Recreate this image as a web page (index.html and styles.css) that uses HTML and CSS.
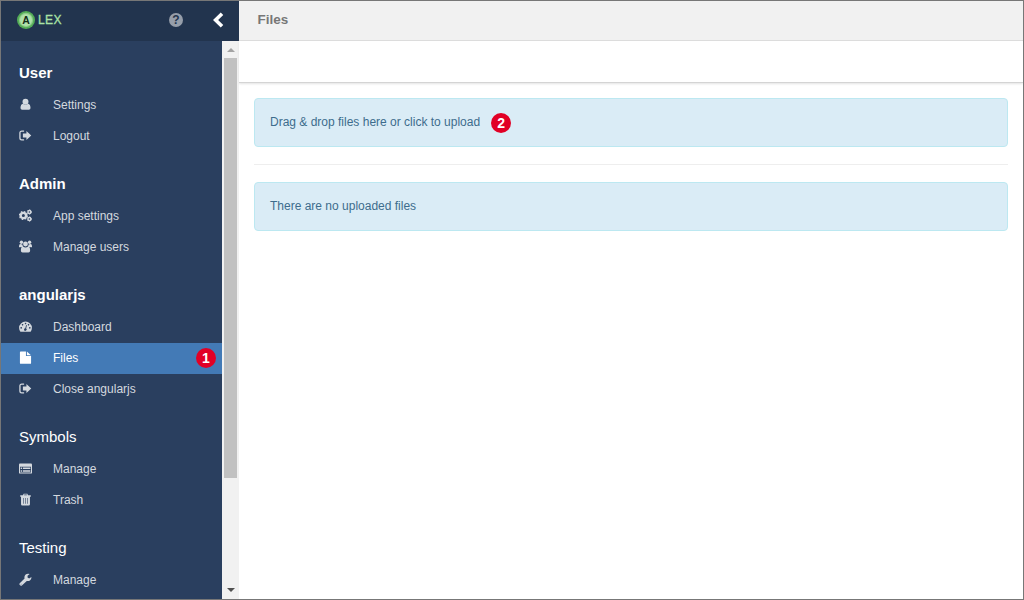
FILE: index.html
```html
<!DOCTYPE html>
<html lang="en">
<head>
<meta charset="utf-8">
<title>ALEX - Files</title>
<link rel="stylesheet" href="styles.css">
</head>
<body>
<div class="app">
  <aside class="sidebar">
    <header class="brand">
      <svg class="logo" viewBox="0 0 20 20"><circle cx="10" cy="10" r="9" fill="#54ad57"/><circle cx="10" cy="10" r="7.200" fill="#8ccb87"/><circle cx="10" cy="10" r="6" fill="#b0e2ab"/></svg>
      <span class="logo-letter">A</span>
      <span class="brand-name">LEX</span>
      <span class="help">?</span>
      <svg class="collapse" viewBox="0 0 12 16"><path d="M10 1.800 3.600 8l6.400 6.200" fill="none" stroke="#fff" stroke-width="3.600"/></svg>
    </header>
    <div class="side-body">
      <nav class="nav">
        <section class="group">
          <h2>User</h2>
          <a class="item"><svg viewBox="0 0 14 14"><circle cx="7" cy="4" r="3.200"/><path d="M4.200 6.100Q7 8.300 9.800 6.100 12.400 6.600 12.400 10.800 12.400 12.700 10.600 12.700H3.400Q1.600 12.700 1.600 10.800 1.600 6.600 4.200 6.100z"/></svg>Settings</a>
          <a class="item"><svg viewBox="0 0 14 14"><path d="M5.500 2.300H3Q1 2.300 1 4.300V9.700Q1 11.700 3 11.700H5.500" fill="none" stroke="currentColor" stroke-width="1.400"/><path d="M4.200 4.800H8V2.100L13.200 7 8 11.900V9.200H4.200z"/></svg>Logout</a>
        </section>
        <section class="group">
          <h2>Admin</h2>
          <a class="item"><svg viewBox="0 0 14 14"><g fill="none" stroke="currentColor"><circle cx="4.700" cy="7" r="2.900" stroke-width="2.500"/><circle cx="4.700" cy="7" r="4.200" stroke-width="1.400" stroke-dasharray="1.650 1.650"/><circle cx="11.200" cy="3.200" r="1.600" stroke-width="1.500"/><circle cx="11.200" cy="3.200" r="2.400" stroke-width=".8" stroke-dasharray="1.250 1.250"/><circle cx="11.200" cy="10.800" r="1.600" stroke-width="1.500"/><circle cx="11.200" cy="10.800" r="2.400" stroke-width=".8" stroke-dasharray="1.250 1.250"/></g></svg>App settings</a>
          <a class="item"><svg viewBox="0 0 14 14"><circle cx="2.600" cy="2.400" r="1.800"/><circle cx="11.400" cy="2.400" r="1.800"/><circle cx="7" cy="4.300" r="2.600"/><path d="M0 7.800Q-.2 4.500 1.500 4.400L3.600 4.800 4.400 7.500zM14 7.800Q14.200 4.500 12.500 4.400L10.400 4.800 9.600 7.500z"/><path d="M4.300 7Q7 9 9.700 7 12 7.200 12 11.400 12 13.500 10.200 13.500H3.800Q2 13.500 2 11.400 2 7.200 4.300 7z"/></svg>Manage users</a>
        </section>
        <section class="group">
          <h2>angularjs</h2>
          <a class="item"><svg viewBox="0 0 14 14"><path fill-rule="evenodd" d="M.1 8.400a6.900 6.700 0 1 1 13.800 0q0 2-1 3.800-.2.400-.6.400H1.700q-.4 0-.6-.4-1-1.800-1-3.800zM2.300 7.600a.8.8 0 1 0 .1 0zM3.800 4.300a.8.8 0 1 0 .1 0zM7 2.900a.8.8 0 1 0 .1 0zM10.200 4.300a.8.8 0 1 0 .1 0zM11.600 7.600a.8.8 0 1 0 .1 0zM7.700 5.300 6.800 8.800a1.400 1.400 0 1 0 .9.300L8.500 5.600z"/></svg>Dashboard</a>
          <a class="item active"><svg viewBox="0 0 14 14"><path d="M1.300.5H7.500V5.500H13V12.800Q13 13.700 12.200 13.700H1.800Q1 13.700 1 12.800V1.300Q1 .5 1.800.5zM8.500.6 12.900 4.600H8.500z"/></svg>Files<span class="badge">1</span></a>
          <a class="item"><svg viewBox="0 0 14 14"><path d="M5.500 2.300H3Q1 2.300 1 4.300V9.700Q1 11.700 3 11.700H5.500" fill="none" stroke="currentColor" stroke-width="1.400"/><path d="M4.200 4.800H8V2.100L13.200 7 8 11.900V9.200H4.200z"/></svg>Close angularjs</a>
        </section>
        <section class="group light">
          <h2>Symbols</h2>
          <a class="item"><svg viewBox="0 0 14 14"><path fill-rule="evenodd" d="M1 1.700H13Q14 1.700 14 2.900V11.600Q14 12.500 13 12.500H1Q0 12.500 0 11.600V2.900Q0 1.700 1 1.700zM1.100 5V11.400H12.900V5z"/><path d="M1.800 5.900h1.500v1.700H1.800zM4.200 5.900H12.200v1.700H4.200zM1.800 8.800h1.500v1.700H1.800zM4.200 8.800H12.200v1.700H4.200z"/></svg>Manage</a>
          <a class="item"><svg viewBox="0 0 14 14"><path fill-rule="evenodd" d="M5 .8H9L9.700 2.500H12.700V4H11.800V12Q11.800 13.500 10.400 13.500H3.600Q2.200 13.500 2.200 12V4H1.300V2.500H4.300zM5.700 1.700 5.400 2.500H8.600L8.300 1.700zM4.400 5.500V11.500H5V5.500zM6.700 5.500V11.500H7.300V5.500zM9 5.500V11.500H9.600V5.500z"/></svg>Trash</a>
        </section>
        <section class="group light">
          <h2>Testing</h2>
          <a class="item"><svg viewBox="0 0 14 14"><path fill-rule="evenodd" d="M.8 11 6 6Q5.400 3.600 6.900 2 8.700.2 11.500 1L9.200 2.900V4.900L10.900 5.800 13.400 4.200Q13.600 6.500 12 7.800 10.300 9.200 8.400 8.500L3.100 13.500Q2.200 14.100 1.300 13.200L.7 12.700Q0 12 .8 11zM2.200 11.600a.4.4 0 1 0 .1 0z"/></svg>Manage</a>
        </section>
      </nav>
      <div class="scrollbar">
        <span class="arrow up"></span>
        <div class="track"><div class="thumb"></div></div>
        <span class="arrow down"></span>
      </div>
    </div>
  </aside>
  <main class="main">
    <header class="title">Files</header>
    <div class="toolbar"></div>
    <div class="content">
      <div class="alert">Drag &amp; drop files here or click to upload<span class="badge">2</span></div>
      <hr>
      <div class="alert">There are no uploaded files</div>
    </div>
  </main>
</div>
</body>
</html>
```
FILE: styles.css
```css
* { box-sizing: border-box; }
body { margin: 0; font: 12px/17px "Liberation Sans", Arial, sans-serif; }
.app { display: flex; width: 1024px; height: 600px; border: 1px solid #777; background: #fff; overflow: hidden; }
.sidebar { width: 238px; flex: none; display: flex; flex-direction: column; background: #2a3f5f; }
.brand { height: 40px; flex: none; display: flex; align-items: center; padding: 0 15px 2px 15px; background: #22344e; }
.logo { width: 20px; height: 20px; }
.logo-letter { width: 20px; margin-left: -20px; text-align: center; font-size: 10.5px; font-weight: bold; color: #16301a; z-index: 1; }
.brand-name { margin-left: 2px; font-size: 12px; letter-spacing: .4px; color: #a9e2a5; -webkit-text-stroke: .3px #a9e2a5; }
.help { width: 14px; height: 14px; margin-left: auto; border-radius: 50%; background: #969eaa; color: #22344e; font-size: 12px; line-height: 14px; font-weight: bold; text-align: center; }
.collapse { width: 12px; height: 16px; margin-left: 29px; }
.side-body { flex: 1; display: flex; min-height: 0; }
.nav { flex: 1; padding-top: 16px; overflow: hidden; }
.group { margin-bottom: 16px; }
.group h2 { margin: 0; padding-left: 18px; height: 33px; font-size: 15px; line-height: 32px; color: #fff; }
.light h2 { font-weight: normal; }
.item { display: flex; align-items: center; height: 31px; padding: 0 6px 0 18px; color: #d4d9df; }
.item svg { width: 13px; height: 13px; flex: none; margin: 0 21px 2px 0; fill: currentColor; }
.item.active { background: #437ab6; color: #fff; }
.badge { width: 20px; height: 20px; border-radius: 50%; background: #e10025; color: #fff; font: bold 14px/20px "Liberation Sans", Arial, sans-serif; text-align: center; }
.item .badge { margin: 0 0 1px auto; }
.scrollbar { width: 17px; display: flex; flex-direction: column; align-items: center; background: #f1f1f1; }
.track { flex: 1; width: 13px; }
.thumb { height: 420px; background: #c1c1c1; }
.arrow { width: 16px; height: 17px; display: flex; align-items: center; justify-content: center; }
.arrow::before { content: ""; border: 4px solid transparent; }
.up::before { border-top: 0; border-bottom-color: #a3a3a3; }
.down::before { border-bottom: 0; border-top-color: #505050; margin-bottom: 2px; }
.main { flex: 1; }
.title { height: 40px; padding-left: 18.5px; border-bottom: 1px solid #dcdcdc; background: #f1f1f1; color: #777; font-size: 13.5px; font-weight: bold; line-height: 37px; }
.toolbar { height: 42px; border-bottom: 1px solid #d4d4d4; box-shadow: 0 1px 2px #e4e4e4; }
.content { padding: 15px; }
.alert { display: flex; align-items: center; height: 49px; padding: 0 15px 1px; border: 1px solid #bce8f1; border-radius: 4px; background: #daecf6; color: #3d6d8d; }
.alert .badge { margin: 2px 0 0 11px; }
hr { margin: 17px 0; border: 0; border-top: 1px solid #eee; }
```
